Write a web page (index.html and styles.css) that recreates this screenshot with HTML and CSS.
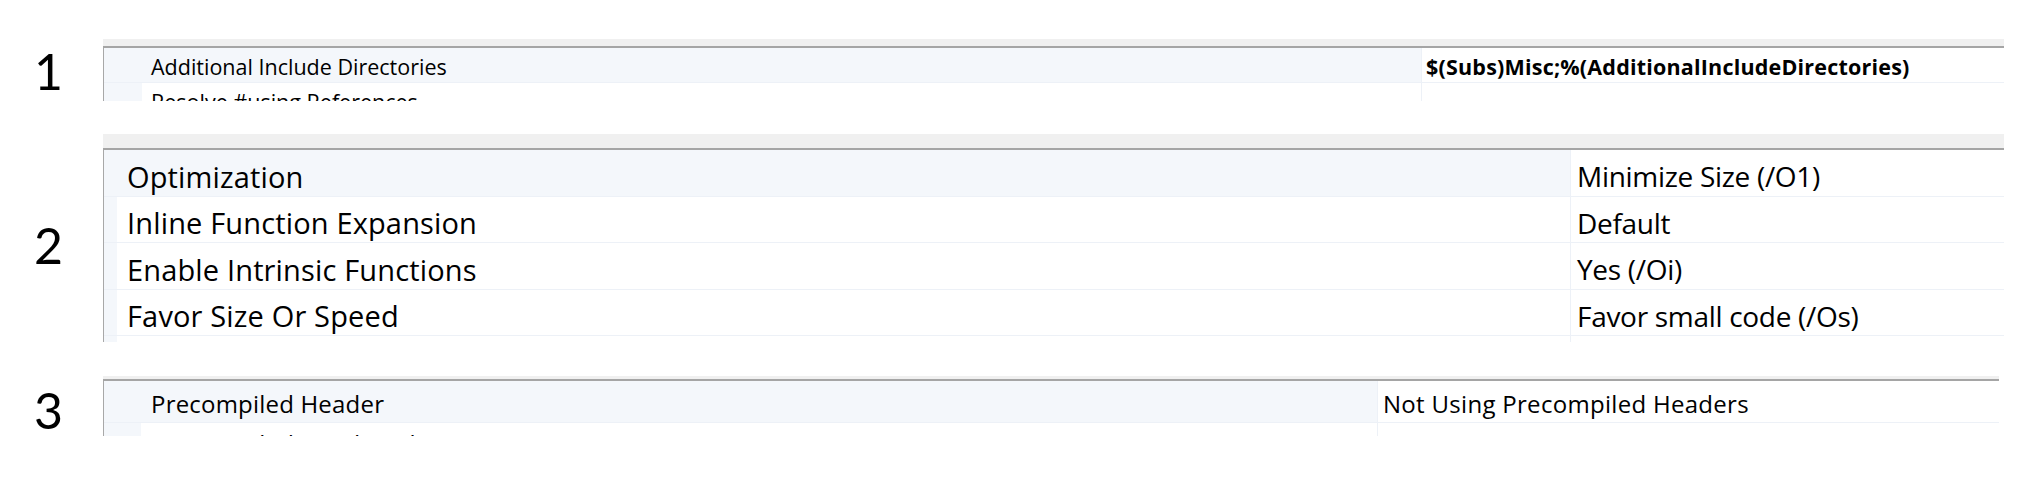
FILE: index.html
```html
<!DOCTYPE html>
<html>
<head>
<meta charset="utf-8">
<link rel="stylesheet" href="styles.css">
</head>
<body>
<div class="page">
  <section class="fig fig1">
    <div class="label">1</div>
    <div class="panel p1">
      <div class="band"></div>
      <div class="rows">
        <div class="row sel">
          <div class="gutter"></div>
          <div class="name">Additional Include Directories</div>
          <div class="value bold">$(Subs)Misc;%(AdditionalIncludeDirectories)</div>
        </div>
        <div class="row">
          <div class="gutter"></div>
          <div class="name">Resolve #using References</div>
          <div class="value"></div>
        </div>
      </div>
    </div>
  </section>

  <section class="fig fig2">
    <div class="label">2</div>
    <div class="panel p2">
      <div class="band"></div>
      <div class="rows">
        <div class="row sel">
          <div class="gutter"></div>
          <div class="name">Optimization</div>
          <div class="value">Minimize Size (/O1)</div>
        </div>
        <div class="row">
          <div class="gutter"></div>
          <div class="name">Inline Function Expansion</div>
          <div class="value">Default</div>
        </div>
        <div class="row">
          <div class="gutter"></div>
          <div class="name">Enable Intrinsic Functions</div>
          <div class="value">Yes (/Oi)</div>
        </div>
        <div class="row">
          <div class="gutter"></div>
          <div class="name">Favor Size Or Speed</div>
          <div class="value">Favor small code (/Os)</div>
        </div>
        <div class="row">
          <div class="gutter"></div>
          <div class="name"></div>
          <div class="value"></div>
        </div>
      </div>
    </div>
  </section>

  <section class="fig fig3">
    <div class="label">3</div>
    <div class="panel p3">
      <div class="band"></div>
      <div class="rows">
        <div class="row sel">
          <div class="gutter"></div>
          <div class="name">Precompiled Header</div>
          <div class="value">Not Using Precompiled Headers</div>
        </div>
        <div class="row next">
          <div class="gutter"></div>
          <div class="name">Precompiled Header File</div>
          <div class="value"></div>
        </div>
      </div>
    </div>
  </section>
</div>
</body>
</html>
```

FILE: styles.css
```css
html, body {
  margin: 0;
  padding: 0;
  background: #ffffff;
}

.page {
  display: flex;
  flex-direction: column;
  padding-top: 39px;
}

.fig {
  display: flex;
  align-items: flex-start;
}

.fig1 { height: 62px; }
.fig2 { height: 208px; margin-top: 33px; }
.fig3 { height: 60px; margin-top: 34px; }

.label {
  width: 103px;
  flex: none;
  box-sizing: border-box;
  padding-right: 6px;
  text-align: center;
  font-family: Lato, "Open Sans", sans-serif;
  font-size: 50px;
  line-height: 50px;
  color: #000;
}

.fig1 .label { padding-top: 7px; }
.fig2 .label { padding-top: 86px; }
.fig3 .label { padding-top: 9px; }

.panel {
  flex: none;
  width: 1901px;
  height: 100%;
  display: flex;
  flex-direction: column;
  overflow: hidden;
  font-family: "Open Sans", "Noto Sans", sans-serif;
  color: #000;
}

.p3 { width: 1896px; }

.band {
  flex: none;
  background: #f0f0f0;
  border-bottom: 2px solid #a5a5a5;
}

.p1 .band { height: 7px; }
.p2 .band { height: 14px; }
.p3 .band { height: 3px; }

.rows {
  flex: 1;
  display: flex;
  flex-direction: column;
  border-left: 1px solid #a8a8a8;
}

.row {
  flex: none;
  display: flex;
  box-sizing: border-box;
  border-bottom: 1px solid #edf1f7;
  white-space: nowrap;
}

.gutter {
  flex: none;
  background: #f4f7fb;
}

.name {
  flex: none;
  display: flex;
  align-items: center;
  box-sizing: border-box;
}

.row.sel .name { background: #f4f7fb; }

.value {
  flex: 1;
  display: flex;
  align-items: center;
  box-sizing: border-box;
  border-left: 1px solid #edf1f7;
}

.bold { font-weight: 700; }

/* panel 1 */
.p1 { font-size: 21.5px; }
.p1 .row { height: 35px; }
.p1 .gutter { width: 38px; }
.p1 .name { width: 1279px; padding-left: 9px; padding-top: 2px; }
.p1 .value { padding-left: 4px; padding-top: 2px; letter-spacing: 0.2px; }

/* panel 2 */
.p2 { font-size: 29px; }
.p2 .row { height: 46.5px; }
.p2 .gutter { width: 13px; }
.p2 .name { width: 1453px; padding-left: 10px; padding-top: 7px; letter-spacing: 0.15px; }
.p2 .value { padding-left: 6px; padding-top: 7px; font-size: 28px; letter-spacing: -0.3px; }

/* panel 3 */
.p3 { font-size: 24px; }
.p3 .row { height: 42px; }
.p3 .gutter { width: 37px; }
.p3 .name { width: 1236px; padding-left: 10px; padding-top: 4px; letter-spacing: 0.2px; }
.p3 .value { padding-left: 5px; padding-top: 4px; letter-spacing: 0.3px; }
.p3 .row.next .name { padding-top: 0; }
```
